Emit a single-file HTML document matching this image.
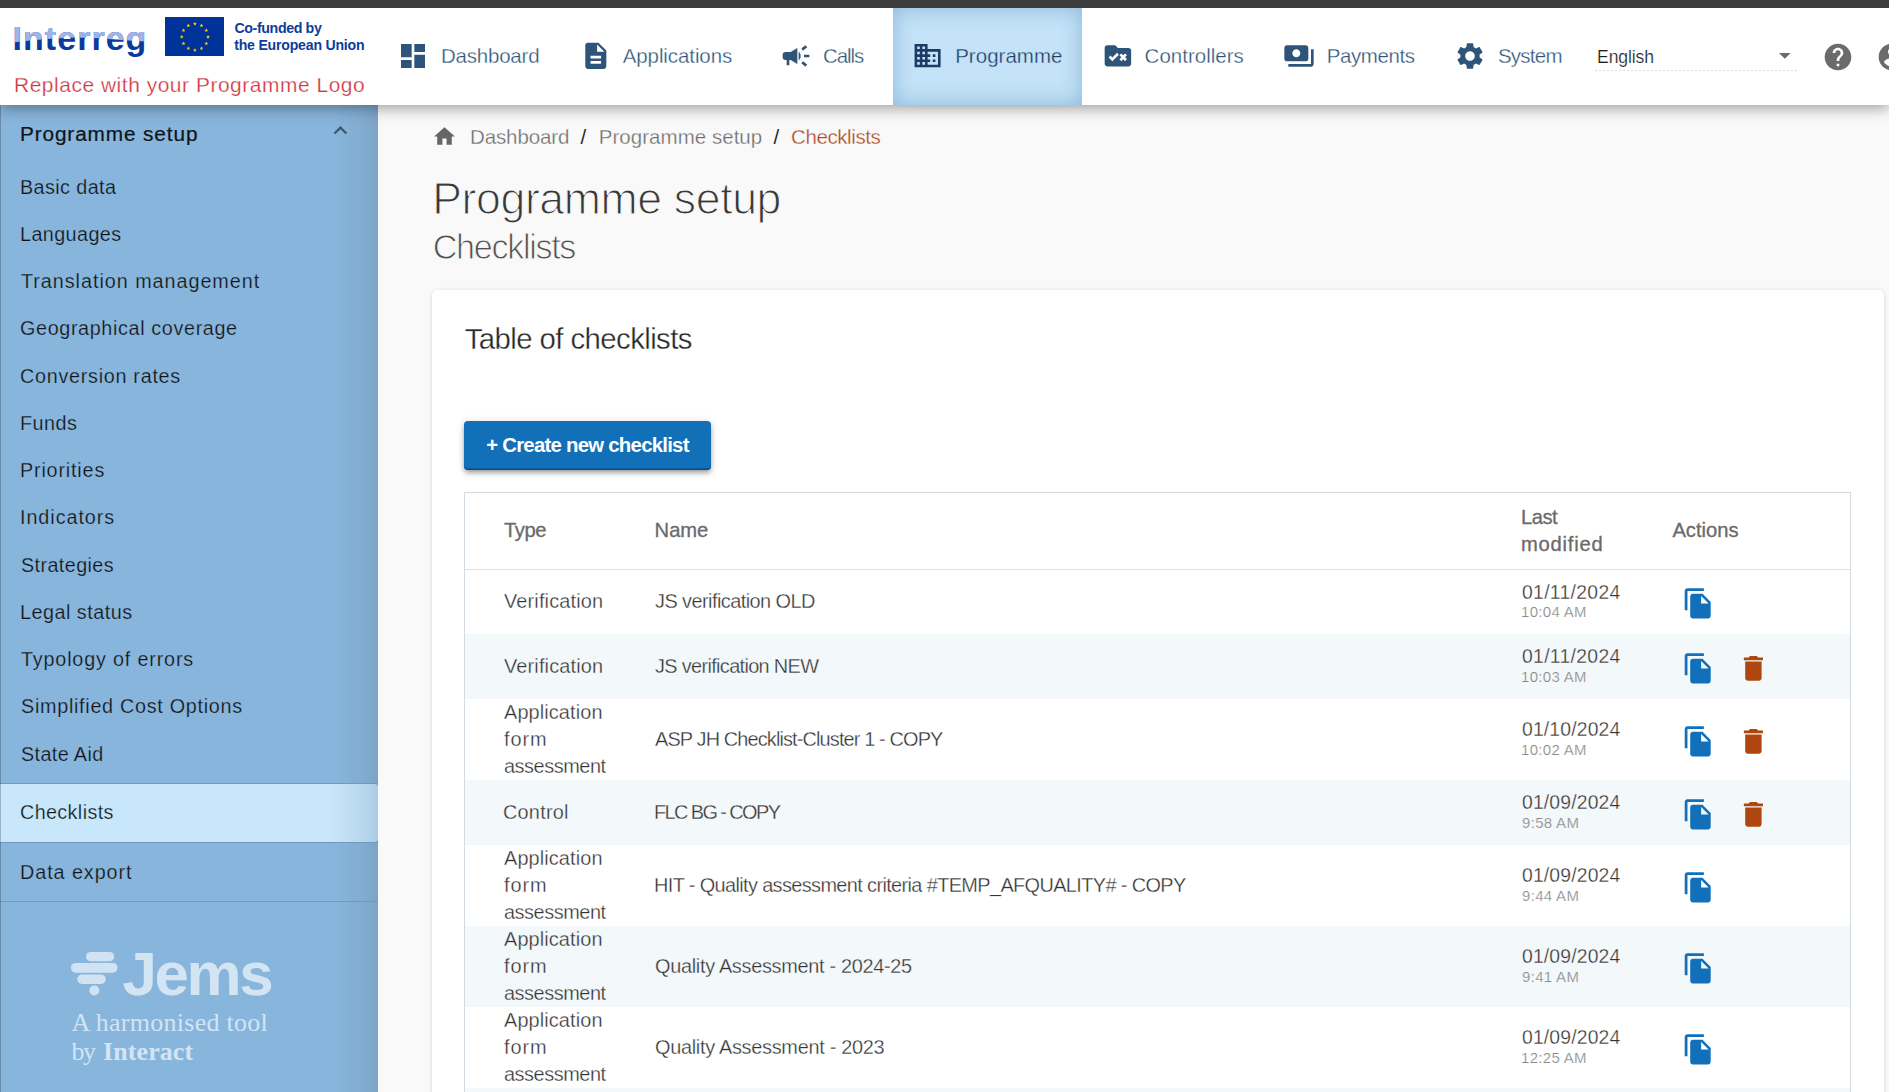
<!DOCTYPE html>
<html><head><meta charset="utf-8"><title>Jems - Checklists</title><style>
*{box-sizing:border-box}
html,body{margin:0;padding:0}
body{width:1889px;height:1092px;overflow:hidden;position:relative;background:#f9f9f9;font-family:'Liberation Sans',sans-serif}
.t{position:absolute;white-space:nowrap;line-height:1;}
.ic{position:absolute;display:block}
.bx{position:absolute}
</style></head>
<body>
<!-- content card -->
<div class="bx" style="left:432px;top:290px;width:1452px;height:900px;background:#fff;border-radius:6px;box-shadow:0 1px 4px rgba(0,0,0,.16)"></div>
<div class="bx" style="left:464px;top:492px;width:1387px;height:700px;border:1px solid #d3dbe2;border-bottom:none;background:#fff"></div>
<div class="bx" style="left:465px;top:569px;width:1385px;height:1px;background:#dedede"></div>
<div class="bx" style="left:465px;top:634.0px;width:1385px;height:65.0px;background:#f3f8fb"></div>
<div class="bx" style="left:465px;top:780.0px;width:1385px;height:65.0px;background:#f3f8fb"></div>
<div class="bx" style="left:465px;top:926.0px;width:1385px;height:81.0px;background:#f3f8fb"></div>
<div class="bx" style="left:465px;top:1088.0px;width:1385px;height:4.0px;background:#f3f8fb"></div>
<div class="bx" style="left:464px;top:421px;width:247px;height:49px;background:#1170b8;border-radius:4px;box-shadow:inset 0 -1.5px 0 rgba(0,30,70,.45),0 2px 4px -1px rgba(0,0,0,.25),0 4px 5px 0 rgba(0,0,0,.16),0 1px 10px 0 rgba(0,0,0,.12)"></div>
<!-- sidebar -->
<div class="bx" style="left:0;top:105px;width:378px;height:987px;background:linear-gradient(to left,rgba(70,80,90,.17),rgba(70,80,90,.08) 18px,rgba(70,80,90,0) 45px),#88b5dc"></div>
<div class="bx" style="left:0;top:783px;width:378px;height:1px;background:#6f9ac0"></div>
<div class="bx" style="left:0;top:784px;width:378px;height:58px;background:linear-gradient(to left,rgba(50,100,140,.2),rgba(50,100,140,.1) 18px,rgba(50,100,140,0) 50px),#c9e7fa;border-top-right-radius:4px;border-bottom-right-radius:4px"></div>
<div class="bx" style="left:0;top:842px;width:378px;height:1px;background:#6f9ac0"></div>
<div class="bx" style="left:0;top:901px;width:378px;height:1px;background:#6f9ac0"></div>
<div class="bx" style="left:0;top:105px;width:1px;height:987px;background:rgba(0,0,0,.22)"></div>
<!-- jems logo -->
<svg class="ic" style="left:60px;top:940px;width:230px;height:70px" viewBox="0 0 230 70">
 <rect x="26" y="12" width="28.2" height="9.3" rx="4.65" fill="#d1e3f2"/>
 <rect x="10.9" y="22.9" width="46.6" height="9.9" rx="4.95" fill="#d1e3f2"/>
 <rect x="17.3" y="34.4" width="28.5" height="9.5" rx="4.75" fill="#d1e3f2"/>
 <circle cx="34.3" cy="50.5" r="5" fill="#d1e3f2"/>
</svg>
<!-- header -->
<div class="bx" style="left:0;top:0;width:1889px;height:8px;background:#3c3c3c;z-index:3"></div>
<div class="bx" style="left:0;top:8px;width:1889px;height:97px;background:#fff;box-shadow:0 3px 14px rgba(0,0,0,.38);z-index:2"></div>
<div class="bx" style="left:893px;top:8px;width:189px;height:97px;background:#c5e3f8;box-shadow:inset 0 0 22px rgba(120,170,210,.75);z-index:2"></div>
<div class="bx" style="left:1595px;top:70px;width:204px;height:1px;background:repeating-linear-gradient(to right,#d5dde0 0 2px,transparent 2px 4px);z-index:2"></div>
<svg class="ic" style="left:1779.1px;top:52.9px;width:11.6px;height:5.8px;z-index:2" viewBox="0 0 11.6 5.8"><path d="M0 0h11.6L5.8 5.8z" fill="#6b6b6b"/></svg>
<span class="t" style="left:12.6px;top:21.0px;font-size:34px;font-weight:700;letter-spacing:1.03px;z-index:2;color:#0b3a9e">Interreg</span><span class="t" style="left:12.6px;top:21.0px;font-size:34px;font-weight:700;letter-spacing:1.03px;z-index:2;color:#a2b3e7;clip-path:polygon(0px 0px,170px 0px,157.4px 21.0px,137.4px 20.8px,107.4px 19.0px,87.4px 17.2px,62.4px 16.6px,37.4px 17.8px,17.4px 19.5px,2.4px 21.2px,-12.6px 21.6px)">Interreg</span>
<div style="position:absolute;left:0;top:0;width:1889px;height:1092px;z-index:4">
<svg class="ic" style="left:164.5px;top:16.6px;width:59.8px;height:39.9px" viewBox="0 0 60 40"><rect width="60" height="40" fill="#003399"/><polygon fill="#ffcc00" points="30.00,4.70 30.50,6.11 32.00,6.15 30.81,7.06 31.23,8.50 30.00,7.65 28.77,8.50 29.19,7.06 28.00,6.15 29.50,6.11"/><polygon fill="#ffcc00" points="36.60,6.47 37.10,7.88 38.60,7.92 37.41,8.83 37.83,10.27 36.60,9.42 35.37,10.27 35.79,8.83 34.60,7.92 36.10,7.88"/><polygon fill="#ffcc00" points="41.43,11.30 41.93,12.71 43.43,12.75 42.24,13.66 42.67,15.10 41.43,14.25 40.20,15.10 40.62,13.66 39.43,12.75 40.93,12.71"/><polygon fill="#ffcc00" points="43.20,17.90 43.70,19.31 45.20,19.35 44.01,20.26 44.43,21.70 43.20,20.85 41.97,21.70 42.39,20.26 41.20,19.35 42.70,19.31"/><polygon fill="#ffcc00" points="41.43,24.50 41.93,25.91 43.43,25.95 42.24,26.86 42.67,28.30 41.43,27.45 40.20,28.30 40.62,26.86 39.43,25.95 40.93,25.91"/><polygon fill="#ffcc00" points="36.60,29.33 37.10,30.74 38.60,30.78 37.41,31.69 37.83,33.13 36.60,32.28 35.37,33.13 35.79,31.69 34.60,30.78 36.10,30.74"/><polygon fill="#ffcc00" points="30.00,31.10 30.50,32.51 32.00,32.55 30.81,33.46 31.23,34.90 30.00,34.05 28.77,34.90 29.19,33.46 28.00,32.55 29.50,32.51"/><polygon fill="#ffcc00" points="23.40,29.33 23.90,30.74 25.40,30.78 24.21,31.69 24.63,33.13 23.40,32.28 22.17,33.13 22.59,31.69 21.40,30.78 22.90,30.74"/><polygon fill="#ffcc00" points="18.57,24.50 19.07,25.91 20.57,25.95 19.38,26.86 19.80,28.30 18.57,27.45 17.33,28.30 17.76,26.86 16.57,25.95 18.07,25.91"/><polygon fill="#ffcc00" points="16.80,17.90 17.30,19.31 18.80,19.35 17.61,20.26 18.03,21.70 16.80,20.85 15.57,21.70 15.99,20.26 14.80,19.35 16.30,19.31"/><polygon fill="#ffcc00" points="18.57,11.30 19.07,12.71 20.57,12.75 19.38,13.66 19.80,15.10 18.57,14.25 17.33,15.10 17.76,13.66 16.57,12.75 18.07,12.71"/><polygon fill="#ffcc00" points="23.40,6.47 23.90,7.88 25.40,7.92 24.21,8.83 24.63,10.27 23.40,9.42 22.17,10.27 22.59,8.83 21.40,7.92 22.90,7.88"/></svg>
<svg class="ic" style="left:397.40px;top:40.10px;width:32.00px;height:32.00px" viewBox="0 0 24 24"><path fill="#2e5479" d="M3 13h8V3H3v10zm0 8h8v-6H3v6zm10 0h8V11h-8v10zm0-18v6h8V3h-8z"/></svg>
<svg class="ic" style="left:579.60px;top:40.10px;width:31.60px;height:31.60px" viewBox="0 0 24 24"><path fill="#2e5479" d="M14 2H6c-1.1 0-1.99.9-1.99 2L4 20c0 1.1.89 2 1.99 2H18c1.1 0 2-.9 2-2V8l-6-6zm2 16H8v-2h8v2zm0-4H8v-2h8v2zm-3-5V3.5L18.5 9H13z"/></svg>
<svg class="ic" style="left:779.50px;top:40.20px;width:32.00px;height:32.00px" viewBox="0 0 24 24"><path fill="#2e5479" d="M18 11v2h4v-2h-4zm-2 6.61c.96.71 2.21 1.65 3.2 2.39.4-.53.8-1.07 1.2-1.6-.99-.74-2.24-1.68-3.2-2.4-.4.54-.8 1.08-1.2 1.61zM20.4 5.6c-.4-.53-.8-1.07-1.2-1.6-.99.74-2.24 1.68-3.2 2.4.4.53.8 1.07 1.2 1.6.96-.72 2.21-1.65 3.2-2.4zM4 9c-1.1 0-2 .9-2 2v2c0 1.1.9 2 2 2h1v4h2v-4h1l5 3V6L8 9H4zm11.5 3c0-1.33-.58-2.53-1.5-3.35v6.69c.92-.81 1.5-2.01 1.5-3.34z"/></svg>
<svg class="ic" style="left:912.00px;top:40.40px;width:31.20px;height:31.20px" viewBox="0 0 24 24"><path fill="#1d3b66" d="M12 7V3H2v18h20V7H12zM6 19H4v-2h2v2zm0-4H4v-2h2v2zm0-4H4V9h2v2zm0-4H4V5h2v2zm4 12H8v-2h2v2zm0-4H8v-2h2v2zm0-4H8V9h2v2zm0-4H8V5h2v2zm10 12h-8v-2h2v-2h-2v-2h2v-2h-2V9h8v10zm-2-8h-2v2h2v-2zm0 4h-2v2h2v-2z"/></svg>
<svg class="ic" style="left:1101.50px;top:39.90px;width:31.80px;height:31.80px" viewBox="0 0 24 24"><path fill="#2e5479" d="M20 6h-8l-2-2H4c-1.1 0-1.99.9-1.99 2L2 18c0 1.1.9 2 2 2h16c1.1 0 2-.9 2-2V8c0-1.1-.9-2-2-2zM7.83 16L5 13.17l1.41-1.41 1.41 1.41 3.54-3.54 1.41 1.41L7.83 16zm9.58-3l1.41 1.41L17.41 16 16 14.59 14.59 16l-1.42-1.41L14.59 13l-1.41-1.41 1.41-1.41L16 11.59l1.41-1.41 1.41 1.41L17.41 13z"/></svg>
<svg class="ic" style="left:1283.40px;top:39.90px;width:32.00px;height:32.00px" viewBox="0 0 24 24"><path fill="#2e5479" d="M19 14V6c0-1.1-.9-2-2-2H3c-1.1 0-2 .9-2 2v8c0 1.1.9 2 2 2h14c1.1 0 2-.9 2-2zm-9-1c-1.66 0-3-1.34-3-3s1.34-3 3-3 3 1.34 3 3-1.34 3-3 3zm13-6v11c0 1.1-.9 2-2 2H4v-2h17V7h2z"/></svg>
<svg class="ic" style="left:1454.10px;top:39.50px;width:32.00px;height:32.00px" viewBox="0 0 24 24"><path fill="#2e5479" d="M19.14 12.94c.04-.3.06-.61.06-.94 0-.32-.02-.64-.07-.94l2.03-1.58c.18-.14.23-.41.12-.61l-1.92-3.32c-.12-.22-.37-.29-.59-.22l-2.39.96c-.5-.38-1.03-.7-1.62-.94l-.36-2.54c-.04-.24-.24-.41-.48-.41h-3.84c-.24 0-.43.17-.47.41l-.36 2.54c-.59.24-1.13.57-1.62.94l-2.39-.96c-.22-.08-.47 0-.59.22L2.74 8.87c-.12.21-.08.47.12.61l2.03 1.58c-.05.3-.09.63-.09.94s.02.64.07.94l-2.03 1.58c-.18.14-.23.41-.12.61l1.92 3.32c.12.22.37.29.59.22l2.39-.96c.5.38 1.03.7 1.62.94l.36 2.54c.05.24.24.41.48.41h3.84c.24 0 .44-.17.47-.41l.36-2.54c.59-.24 1.13-.56 1.62-.94l2.39.96c.22.08.47 0 .59-.22l1.92-3.32c.12-.22.07-.47-.12-.61l-2.01-1.58zM12 15.6c-1.98 0-3.6-1.62-3.6-3.6s1.62-3.6 3.6-3.6 3.6 1.62 3.6 3.6-1.62 3.6-3.6 3.6z"/></svg>
<svg class="ic" style="left:1822.00px;top:41.00px;width:32.00px;height:32.00px" viewBox="0 0 24 24"><path fill="#6b6b6b" d="M12 2C6.48 2 2 6.48 2 12s4.48 10 10 10 10-4.48 10-10S17.52 2 12 2zm1 17h-2v-2h2v2zm2.07-7.75l-.9.92C13.45 12.9 13 13.5 13 15h-2v-.5c0-1.1.45-2.1 1.17-2.83l1.24-1.26c.37-.36.59-.86.59-1.41 0-1.1-.9-2-2-2s-2 .9-2 2H8c0-2.21 1.79-4 4-4s4 1.79 4 4c0 .88-.36 1.68-.93 2.25z"/></svg>
<svg class="ic" style="left:1876.00px;top:41.00px;width:32.00px;height:32.00px" viewBox="0 0 24 24"><path fill="#6b6b6b" d="M12 2C6.48 2 2 6.48 2 12s4.48 10 10 10 10-4.48 10-10S17.52 2 12 2zm0 3c1.66 0 3 1.34 3 3s-1.34 3-3 3-3-1.34-3-3 1.34-3 3-3zm0 14.2c-2.5 0-4.71-1.28-6-3.22.03-1.99 4-3.08 6-3.08 1.99 0 5.97 1.09 6 3.08-1.29 1.94-3.5 3.22-6 3.22z"/></svg>
<svg class="ic" style="left:432.20px;top:124.30px;width:25.00px;height:25.00px" viewBox="0 0 24 24"><path fill="#666666" d="M10 20v-6h4v6h5v-8h3L12 3 2 12h3v8z"/></svg>
<svg class="ic" style="left:327.30px;top:117.00px;width:26.90px;height:26.90px" viewBox="0 0 24 24"><path fill="#3c5870" d="M12 8l-6 6 1.41 1.41L12 10.83l4.59 4.58L18 14z"/></svg>
<svg class="ic" style="left:1682.40px;top:586.75px;width:32.80px;height:32.80px" viewBox="0 0 24 24"><path fill="#1170b9" d="M16 1H4c-1.1 0-2 .9-2 2v14h2V3h12V1zm-1 4l6 6v10c0 1.1-.9 2-2 2H7.99C6.89 23 6 22.1 6 21l.01-14c0-1.1.89-2 1.99-2h7zm-1 7h5.5L14 6.5V12z"/></svg>
<svg class="ic" style="left:1682.40px;top:651.50px;width:32.80px;height:32.80px" viewBox="0 0 24 24"><path fill="#1170b9" d="M16 1H4c-1.1 0-2 .9-2 2v14h2V3h12V1zm-1 4l6 6v10c0 1.1-.9 2-2 2H7.99C6.89 23 6 22.1 6 21l.01-14c0-1.1.89-2 1.99-2h7zm-1 7h5.5L14 6.5V12z"/></svg>
<svg class="ic" style="left:1736.50px;top:651.50px;width:32.80px;height:32.80px" viewBox="0 0 24 24"><path fill="#b0460f" d="M6 19c0 1.1.9 2 2 2h8c1.1 0 2-.9 2-2V7H6v12zM19 4h-3.5l-1-1h-5l-1 1H5v2h14V4z"/></svg>
<svg class="ic" style="left:1682.40px;top:724.50px;width:32.80px;height:32.80px" viewBox="0 0 24 24"><path fill="#1170b9" d="M16 1H4c-1.1 0-2 .9-2 2v14h2V3h12V1zm-1 4l6 6v10c0 1.1-.9 2-2 2H7.99C6.89 23 6 22.1 6 21l.01-14c0-1.1.89-2 1.99-2h7zm-1 7h5.5L14 6.5V12z"/></svg>
<svg class="ic" style="left:1736.50px;top:724.50px;width:32.80px;height:32.80px" viewBox="0 0 24 24"><path fill="#b0460f" d="M6 19c0 1.1.9 2 2 2h8c1.1 0 2-.9 2-2V7H6v12zM19 4h-3.5l-1-1h-5l-1 1H5v2h14V4z"/></svg>
<svg class="ic" style="left:1682.40px;top:797.50px;width:32.80px;height:32.80px" viewBox="0 0 24 24"><path fill="#1170b9" d="M16 1H4c-1.1 0-2 .9-2 2v14h2V3h12V1zm-1 4l6 6v10c0 1.1-.9 2-2 2H7.99C6.89 23 6 22.1 6 21l.01-14c0-1.1.89-2 1.99-2h7zm-1 7h5.5L14 6.5V12z"/></svg>
<svg class="ic" style="left:1736.50px;top:797.50px;width:32.80px;height:32.80px" viewBox="0 0 24 24"><path fill="#b0460f" d="M6 19c0 1.1.9 2 2 2h8c1.1 0 2-.9 2-2V7H6v12zM19 4h-3.5l-1-1h-5l-1 1H5v2h14V4z"/></svg>
<svg class="ic" style="left:1682.40px;top:870.50px;width:32.80px;height:32.80px" viewBox="0 0 24 24"><path fill="#1170b9" d="M16 1H4c-1.1 0-2 .9-2 2v14h2V3h12V1zm-1 4l6 6v10c0 1.1-.9 2-2 2H7.99C6.89 23 6 22.1 6 21l.01-14c0-1.1.89-2 1.99-2h7zm-1 7h5.5L14 6.5V12z"/></svg>
<svg class="ic" style="left:1682.40px;top:951.50px;width:32.80px;height:32.80px" viewBox="0 0 24 24"><path fill="#1170b9" d="M16 1H4c-1.1 0-2 .9-2 2v14h2V3h12V1zm-1 4l6 6v10c0 1.1-.9 2-2 2H7.99C6.89 23 6 22.1 6 21l.01-14c0-1.1.89-2 1.99-2h7zm-1 7h5.5L14 6.5V12z"/></svg>
<svg class="ic" style="left:1682.40px;top:1032.50px;width:32.80px;height:32.80px" viewBox="0 0 24 24"><path fill="#1170b9" d="M16 1H4c-1.1 0-2 .9-2 2v14h2V3h12V1zm-1 4l6 6v10c0 1.1-.9 2-2 2H7.99C6.89 23 6 22.1 6 21l.01-14c0-1.1.89-2 1.99-2h7zm-1 7h5.5L14 6.5V12z"/></svg>
<span class="t " style="left:234.40px;top:21.00px;font-size:14.24px;letter-spacing:-0.391px;font-weight:700;color:#0c3d9e;font-family:'Liberation Sans';">Co-funded by</span>
<span class="t " style="left:234.20px;top:38.00px;font-size:14.10px;letter-spacing:-0.205px;font-weight:700;color:#0c3d9e;font-family:'Liberation Sans';">the European Union</span>
<span class="t " style="left:14.00px;top:75.00px;font-size:20.93px;letter-spacing:0.545px;font-weight:400;color:#d2343f;font-family:'Liberation Sans';-webkit-text-stroke:0.25px #ffffff;">Replace with your Programme Logo</span>
<span class="t " style="left:440.90px;top:46.00px;font-size:20.49px;letter-spacing:-0.190px;font-weight:400;color:#2e5479;font-family:'Liberation Sans';-webkit-text-stroke:0.30px #ffffff;">Dashboard</span>
<span class="t " style="left:622.70px;top:46.00px;font-size:20.49px;letter-spacing:-0.083px;font-weight:400;color:#2e5479;font-family:'Liberation Sans';-webkit-text-stroke:0.30px #ffffff;">Applications</span>
<span class="t " style="left:822.90px;top:46.00px;font-size:20.49px;letter-spacing:-1.047px;font-weight:400;color:#2e5479;font-family:'Liberation Sans';-webkit-text-stroke:0.30px #ffffff;">Calls</span>
<span class="t " style="left:955.20px;top:46.00px;font-size:20.49px;letter-spacing:0.024px;font-weight:400;color:#1d3b66;font-family:'Liberation Sans';-webkit-text-stroke:0.30px #c5e3f8;">Programme</span>
<span class="t " style="left:1144.60px;top:46.00px;font-size:20.49px;letter-spacing:0.020px;font-weight:400;color:#2e5479;font-family:'Liberation Sans';-webkit-text-stroke:0.30px #ffffff;">Controllers</span>
<span class="t " style="left:1326.70px;top:46.00px;font-size:20.49px;letter-spacing:-0.405px;font-weight:400;color:#2e5479;font-family:'Liberation Sans';-webkit-text-stroke:0.30px #ffffff;">Payments</span>
<span class="t " style="left:1497.90px;top:46.00px;font-size:20.49px;letter-spacing:-0.746px;font-weight:400;color:#2e5479;font-family:'Liberation Sans';-webkit-text-stroke:0.30px #ffffff;">System</span>
<span class="t " style="left:1597.00px;top:49.00px;font-size:17.59px;letter-spacing:-0.096px;font-weight:400;color:#1e1e1e;font-family:'Liberation Sans';-webkit-text-stroke:0.20px #ffffff;">English</span>
<span class="t " style="left:19.90px;top:124.00px;font-size:20.79px;letter-spacing:0.885px;font-weight:400;color:#111417;font-family:'Liberation Sans';-webkit-text-stroke:0.22px #111417;">Programme setup</span>
<span class="t " style="left:20.00px;top:178.00px;font-size:19.77px;letter-spacing:0.411px;font-weight:400;color:#111417;font-family:'Liberation Sans';-webkit-text-stroke:0.25px #88b5dc;">Basic data</span>
<span class="t " style="left:20.00px;top:225.00px;font-size:19.77px;letter-spacing:0.407px;font-weight:400;color:#111417;font-family:'Liberation Sans';-webkit-text-stroke:0.25px #88b5dc;">Languages</span>
<span class="t " style="left:21.00px;top:272.00px;font-size:19.77px;letter-spacing:0.966px;font-weight:400;color:#111417;font-family:'Liberation Sans';-webkit-text-stroke:0.25px #88b5dc;">Translation management</span>
<span class="t " style="left:20.00px;top:319.00px;font-size:19.77px;letter-spacing:0.636px;font-weight:400;color:#111417;font-family:'Liberation Sans';-webkit-text-stroke:0.25px #88b5dc;">Geographical coverage</span>
<span class="t " style="left:20.00px;top:367.00px;font-size:19.77px;letter-spacing:0.718px;font-weight:400;color:#111417;font-family:'Liberation Sans';-webkit-text-stroke:0.25px #88b5dc;">Conversion rates</span>
<span class="t " style="left:20.00px;top:414.00px;font-size:19.77px;letter-spacing:0.487px;font-weight:400;color:#111417;font-family:'Liberation Sans';-webkit-text-stroke:0.25px #88b5dc;">Funds</span>
<span class="t " style="left:20.00px;top:461.00px;font-size:19.77px;letter-spacing:0.822px;font-weight:400;color:#111417;font-family:'Liberation Sans';-webkit-text-stroke:0.25px #88b5dc;">Priorities</span>
<span class="t " style="left:20.00px;top:508.00px;font-size:19.77px;letter-spacing:0.943px;font-weight:400;color:#111417;font-family:'Liberation Sans';-webkit-text-stroke:0.25px #88b5dc;">Indicators</span>
<span class="t " style="left:21.00px;top:556.00px;font-size:19.77px;letter-spacing:0.399px;font-weight:400;color:#111417;font-family:'Liberation Sans';-webkit-text-stroke:0.25px #88b5dc;">Strategies</span>
<span class="t " style="left:20.00px;top:603.00px;font-size:19.77px;letter-spacing:0.500px;font-weight:400;color:#111417;font-family:'Liberation Sans';-webkit-text-stroke:0.25px #88b5dc;">Legal status</span>
<span class="t " style="left:21.00px;top:650.00px;font-size:19.77px;letter-spacing:0.823px;font-weight:400;color:#111417;font-family:'Liberation Sans';-webkit-text-stroke:0.25px #88b5dc;">Typology of errors</span>
<span class="t " style="left:21.00px;top:697.00px;font-size:19.77px;letter-spacing:0.712px;font-weight:400;color:#111417;font-family:'Liberation Sans';-webkit-text-stroke:0.25px #88b5dc;">Simplified Cost Options</span>
<span class="t " style="left:21.00px;top:745.00px;font-size:19.77px;letter-spacing:0.385px;font-weight:400;color:#111417;font-family:'Liberation Sans';-webkit-text-stroke:0.25px #88b5dc;">State Aid</span>
<span class="t " style="left:20.00px;top:803.00px;font-size:19.77px;letter-spacing:0.369px;font-weight:400;color:#111417;font-family:'Liberation Sans';-webkit-text-stroke:0.25px #c9e7fa;">Checklists</span>
<span class="t " style="left:20.00px;top:863.00px;font-size:19.77px;letter-spacing:0.931px;font-weight:400;color:#111417;font-family:'Liberation Sans';-webkit-text-stroke:0.25px #88b5dc;">Data export</span>
<span class="t " style="left:470.00px;top:127.00px;font-size:20.49px;letter-spacing:-0.102px;font-weight:400;color:#6b6b6b;font-family:'Liberation Sans';-webkit-text-stroke:0.30px #f9f9f9;">Dashboard</span>
<span class="t " style="left:580.60px;top:127.00px;font-size:20.49px;letter-spacing:0.000px;font-weight:400;color:#2a2a2a;font-family:'Liberation Sans';">/</span>
<span class="t " style="left:598.80px;top:127.00px;font-size:20.49px;letter-spacing:0.042px;font-weight:400;color:#6b6b6b;font-family:'Liberation Sans';-webkit-text-stroke:0.30px #f9f9f9;">Programme setup</span>
<span class="t " style="left:773.40px;top:127.00px;font-size:20.49px;letter-spacing:0.000px;font-weight:400;color:#2a2a2a;font-family:'Liberation Sans';">/</span>
<span class="t " style="left:791.00px;top:127.00px;font-size:20.49px;letter-spacing:-0.389px;font-weight:400;color:#b0461d;font-family:'Liberation Sans';-webkit-text-stroke:0.30px #f9f9f9;">Checklists</span>
<span class="t " style="left:432.20px;top:177.00px;font-size:44.62px;letter-spacing:-0.381px;font-weight:400;color:#383838;font-family:'Liberation Sans';-webkit-text-stroke:1.2px #f9f9f9;">Programme setup</span>
<span class="t " style="left:432.80px;top:230.00px;font-size:34.16px;letter-spacing:-1.340px;font-weight:400;color:#505050;font-family:'Liberation Sans';-webkit-text-stroke:0.9px #f9f9f9;">Checklists</span>
<span class="t " style="left:464.70px;top:324.00px;font-size:29.36px;letter-spacing:-0.581px;font-weight:400;color:#262626;font-family:'Liberation Sans';-webkit-text-stroke:0.35px #ffffff;">Table of checklists</span>
<span class="t " style="left:486.20px;top:435.00px;font-size:20.35px;letter-spacing:-0.740px;font-weight:700;color:#ffffff;font-family:'Liberation Sans';">+ Create new checklist</span>
<span class="t " style="left:503.90px;top:520.00px;font-size:20.20px;letter-spacing:-0.413px;font-weight:400;color:#6a6a6a;font-family:'Liberation Sans';-webkit-text-stroke:0.3px #6a6a6a;">Type</span>
<span class="t " style="left:654.60px;top:520.00px;font-size:20.20px;letter-spacing:-0.041px;font-weight:400;color:#6a6a6a;font-family:'Liberation Sans';-webkit-text-stroke:0.3px #6a6a6a;">Name</span>
<span class="t " style="left:1520.90px;top:507.00px;font-size:20.20px;letter-spacing:-0.483px;font-weight:400;color:#6a6a6a;font-family:'Liberation Sans';-webkit-text-stroke:0.3px #6a6a6a;">Last</span>
<span class="t " style="left:1520.90px;top:534.00px;font-size:20.20px;letter-spacing:0.789px;font-weight:400;color:#6a6a6a;font-family:'Liberation Sans';-webkit-text-stroke:0.3px #6a6a6a;">modified</span>
<span class="t " style="left:1672.40px;top:520.00px;font-size:20.20px;letter-spacing:0.015px;font-weight:400;color:#6a6a6a;font-family:'Liberation Sans';-webkit-text-stroke:0.3px #6a6a6a;">Actions</span>
<span class="t " style="left:504.00px;top:592.00px;font-size:19.91px;letter-spacing:0.154px;font-weight:400;color:#333333;font-family:'Liberation Sans';-webkit-text-stroke:0.30px #ffffff;">Verification</span>
<span class="t " style="left:655.00px;top:592.00px;font-size:19.91px;letter-spacing:-0.555px;font-weight:400;color:#333333;font-family:'Liberation Sans';-webkit-text-stroke:0.30px #ffffff;">JS verification OLD</span>
<span class="t " style="left:1522.00px;top:583.00px;font-size:19.33px;letter-spacing:0.328px;font-weight:400;color:#333333;font-family:'Liberation Sans';-webkit-text-stroke:0.30px #ffffff;">01/11/2024</span>
<span class="t " style="left:1521.00px;top:605.00px;font-size:14.97px;letter-spacing:0.313px;font-weight:400;color:#8a8a8a;font-family:'Liberation Sans';-webkit-text-stroke:0.20px #ffffff;">10:04 AM</span>
<span class="t " style="left:504.00px;top:657.00px;font-size:19.91px;letter-spacing:0.154px;font-weight:400;color:#333333;font-family:'Liberation Sans';-webkit-text-stroke:0.30px #f3f8fb;">Verification</span>
<span class="t " style="left:655.00px;top:657.00px;font-size:19.91px;letter-spacing:-0.661px;font-weight:400;color:#333333;font-family:'Liberation Sans';-webkit-text-stroke:0.30px #f3f8fb;">JS verification NEW</span>
<span class="t " style="left:1522.00px;top:647.00px;font-size:19.33px;letter-spacing:0.328px;font-weight:400;color:#333333;font-family:'Liberation Sans';-webkit-text-stroke:0.30px #f3f8fb;">01/11/2024</span>
<span class="t " style="left:1521.00px;top:670.00px;font-size:14.97px;letter-spacing:0.313px;font-weight:400;color:#8a8a8a;font-family:'Liberation Sans';-webkit-text-stroke:0.20px #f3f8fb;">10:03 AM</span>
<span class="t " style="left:504.00px;top:703.00px;font-size:19.91px;letter-spacing:0.109px;font-weight:400;color:#333333;font-family:'Liberation Sans';-webkit-text-stroke:0.30px #ffffff;">Application</span>
<span class="t " style="left:504.00px;top:730.00px;font-size:19.91px;letter-spacing:0.890px;font-weight:400;color:#333333;font-family:'Liberation Sans';-webkit-text-stroke:0.30px #ffffff;">form</span>
<span class="t " style="left:504.00px;top:757.00px;font-size:19.91px;letter-spacing:-0.453px;font-weight:400;color:#333333;font-family:'Liberation Sans';-webkit-text-stroke:0.30px #ffffff;">assessment</span>
<span class="t " style="left:655.00px;top:730.00px;font-size:19.91px;letter-spacing:-0.865px;font-weight:400;color:#333333;font-family:'Liberation Sans';-webkit-text-stroke:0.30px #ffffff;">ASP JH Checklist-Cluster 1 - COPY</span>
<span class="t " style="left:1522.00px;top:720.00px;font-size:19.33px;letter-spacing:0.168px;font-weight:400;color:#333333;font-family:'Liberation Sans';-webkit-text-stroke:0.30px #ffffff;">01/10/2024</span>
<span class="t " style="left:1521.00px;top:743.00px;font-size:14.97px;letter-spacing:0.313px;font-weight:400;color:#8a8a8a;font-family:'Liberation Sans';-webkit-text-stroke:0.20px #ffffff;">10:02 AM</span>
<span class="t " style="left:503.00px;top:803.00px;font-size:19.91px;letter-spacing:0.209px;font-weight:400;color:#333333;font-family:'Liberation Sans';-webkit-text-stroke:0.30px #f3f8fb;">Control</span>
<span class="t " style="left:654.00px;top:803.00px;font-size:19.91px;letter-spacing:-1.585px;font-weight:400;color:#333333;font-family:'Liberation Sans';-webkit-text-stroke:0.30px #f3f8fb;">FLC BG - COPY</span>
<span class="t " style="left:1522.00px;top:793.00px;font-size:19.33px;letter-spacing:0.168px;font-weight:400;color:#333333;font-family:'Liberation Sans';-webkit-text-stroke:0.30px #f3f8fb;">01/09/2024</span>
<span class="t " style="left:1522.00px;top:816.00px;font-size:14.97px;letter-spacing:0.322px;font-weight:400;color:#8a8a8a;font-family:'Liberation Sans';-webkit-text-stroke:0.20px #f3f8fb;">9:58 AM</span>
<span class="t " style="left:504.00px;top:849.00px;font-size:19.91px;letter-spacing:0.109px;font-weight:400;color:#333333;font-family:'Liberation Sans';-webkit-text-stroke:0.30px #ffffff;">Application</span>
<span class="t " style="left:504.00px;top:876.00px;font-size:19.91px;letter-spacing:0.890px;font-weight:400;color:#333333;font-family:'Liberation Sans';-webkit-text-stroke:0.30px #ffffff;">form</span>
<span class="t " style="left:504.00px;top:903.00px;font-size:19.91px;letter-spacing:-0.453px;font-weight:400;color:#333333;font-family:'Liberation Sans';-webkit-text-stroke:0.30px #ffffff;">assessment</span>
<span class="t " style="left:654.00px;top:876.00px;font-size:19.91px;letter-spacing:-0.623px;font-weight:400;color:#333333;font-family:'Liberation Sans';-webkit-text-stroke:0.30px #ffffff;">HIT - Quality assessment criteria #TEMP_AFQUALITY# - COPY</span>
<span class="t " style="left:1522.00px;top:866.00px;font-size:19.33px;letter-spacing:0.168px;font-weight:400;color:#333333;font-family:'Liberation Sans';-webkit-text-stroke:0.30px #ffffff;">01/09/2024</span>
<span class="t " style="left:1522.00px;top:889.00px;font-size:14.97px;letter-spacing:0.322px;font-weight:400;color:#8a8a8a;font-family:'Liberation Sans';-webkit-text-stroke:0.20px #ffffff;">9:44 AM</span>
<span class="t " style="left:504.00px;top:930.00px;font-size:19.91px;letter-spacing:0.109px;font-weight:400;color:#333333;font-family:'Liberation Sans';-webkit-text-stroke:0.30px #f3f8fb;">Application</span>
<span class="t " style="left:504.00px;top:957.00px;font-size:19.91px;letter-spacing:0.890px;font-weight:400;color:#333333;font-family:'Liberation Sans';-webkit-text-stroke:0.30px #f3f8fb;">form</span>
<span class="t " style="left:504.00px;top:984.00px;font-size:19.91px;letter-spacing:-0.453px;font-weight:400;color:#333333;font-family:'Liberation Sans';-webkit-text-stroke:0.30px #f3f8fb;">assessment</span>
<span class="t " style="left:655.00px;top:957.00px;font-size:19.91px;letter-spacing:-0.310px;font-weight:400;color:#333333;font-family:'Liberation Sans';-webkit-text-stroke:0.30px #f3f8fb;">Quality Assessment - 2024-25</span>
<span class="t " style="left:1522.00px;top:947.00px;font-size:19.33px;letter-spacing:0.168px;font-weight:400;color:#333333;font-family:'Liberation Sans';-webkit-text-stroke:0.30px #f3f8fb;">01/09/2024</span>
<span class="t " style="left:1522.00px;top:970.00px;font-size:14.97px;letter-spacing:0.322px;font-weight:400;color:#8a8a8a;font-family:'Liberation Sans';-webkit-text-stroke:0.20px #f3f8fb;">9:41 AM</span>
<span class="t " style="left:504.00px;top:1011.00px;font-size:19.91px;letter-spacing:0.109px;font-weight:400;color:#333333;font-family:'Liberation Sans';-webkit-text-stroke:0.30px #ffffff;">Application</span>
<span class="t " style="left:504.00px;top:1038.00px;font-size:19.91px;letter-spacing:0.890px;font-weight:400;color:#333333;font-family:'Liberation Sans';-webkit-text-stroke:0.30px #ffffff;">form</span>
<span class="t " style="left:504.00px;top:1065.00px;font-size:19.91px;letter-spacing:-0.453px;font-weight:400;color:#333333;font-family:'Liberation Sans';-webkit-text-stroke:0.30px #ffffff;">assessment</span>
<span class="t " style="left:655.00px;top:1038.00px;font-size:19.91px;letter-spacing:-0.300px;font-weight:400;color:#333333;font-family:'Liberation Sans';-webkit-text-stroke:0.30px #ffffff;">Quality Assessment - 2023</span>
<span class="t " style="left:1522.00px;top:1028.00px;font-size:19.33px;letter-spacing:0.168px;font-weight:400;color:#333333;font-family:'Liberation Sans';-webkit-text-stroke:0.30px #ffffff;">01/09/2024</span>
<span class="t " style="left:1521.00px;top:1051.00px;font-size:14.97px;letter-spacing:0.313px;font-weight:400;color:#8a8a8a;font-family:'Liberation Sans';-webkit-text-stroke:0.20px #ffffff;">12:25 AM</span>
<span class="t " style="left:122.40px;top:943.00px;font-size:61.92px;letter-spacing:-2.368px;font-weight:700;color:#d3e4f3;font-family:'Liberation Sans';">Jems</span>
<span class="t " style="left:71.40px;top:1010.00px;font-size:25.96px;letter-spacing:0.290px;font-weight:400;color:#d3e4f3;font-family:'Liberation Serif';">A harmonised tool</span>
<span class="t " style="left:71.40px;top:1039.00px;font-size:25.96px;letter-spacing:-1.377px;font-weight:400;color:#d3e4f3;font-family:'Liberation Serif';">by</span>
<span class="t " style="left:103.00px;top:1039.00px;font-size:25.96px;letter-spacing:0.113px;font-weight:700;color:#d3e4f3;font-family:'Liberation Serif';">Interact</span>
</div>
</body></html>
